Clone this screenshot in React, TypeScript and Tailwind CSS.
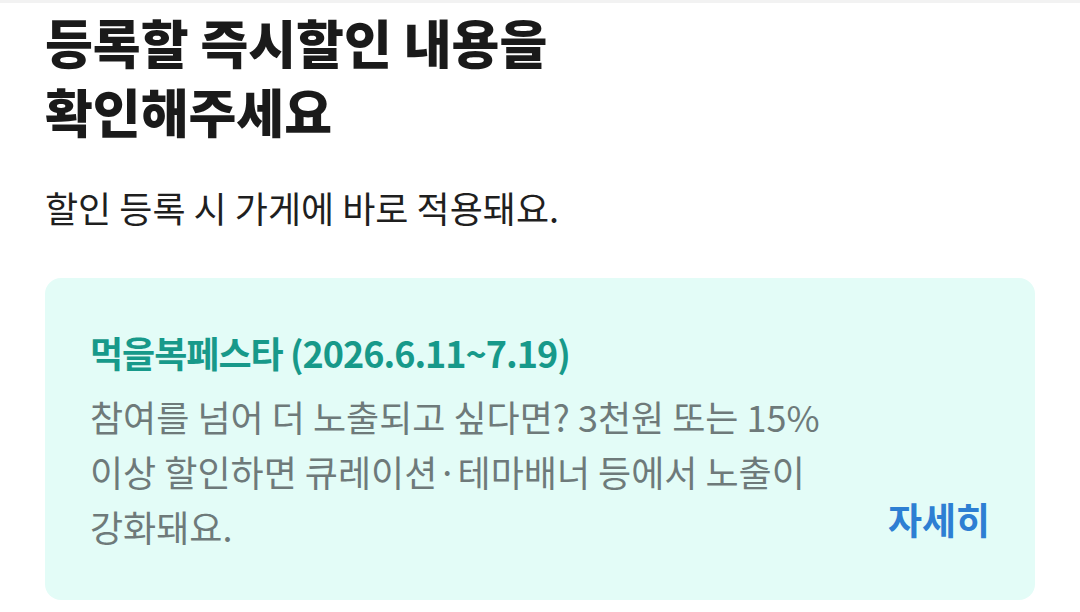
export default function App() {
  return (
    <div
      className="w-[1080px] h-[612px] overflow-hidden bg-white"
      style={{ fontFamily: '"Noto Sans CJK KR", "Noto Sans", sans-serif' }}
    >
      <div className="h-[3px] bg-[#f2f2f2]" />
      <div className="px-[45px]">
        <h1 className="mt-[4px] text-[52px] leading-[69px] font-black text-[#1a1a1a]">
          등록할 즉시할인 내용을
          <br />
          확인해주세요
        </h1>
        <p className="mt-[40px] text-[36px] leading-[44px] text-[#1f1f1f]">할인 등록 시 가게에 바로 적용돼요.</p>

        {/* Discount info card */}
        <div className="mt-[49px] h-[322px] rounded-[16px] bg-[#e3fcf7] px-[45px] pt-[52px]">
          <h2 className="text-[36px] leading-[44px] font-bold text-[#17998a] tracking-[-1px]">
            먹을복페스타 (2026.6.11~7.19)
          </h2>
          <div className="mt-[15px] flex items-end justify-between">
            <p className="flex-none text-[36px] leading-[55px] text-[#6e7a7a]">
              참여를 넘어 더 노출되고 싶다면? 3천원 또는 15%
              <br />
              이상 할인하면 큐레이션·테마배너 등에서 노출이
              <br />
              강화돼요.
            </p>
            <button className="mb-[13px] text-[37px] leading-[44px] font-bold text-[#2d7fd3]">자세히</button>
          </div>
        </div>
      </div>
    </div>
  );
}
